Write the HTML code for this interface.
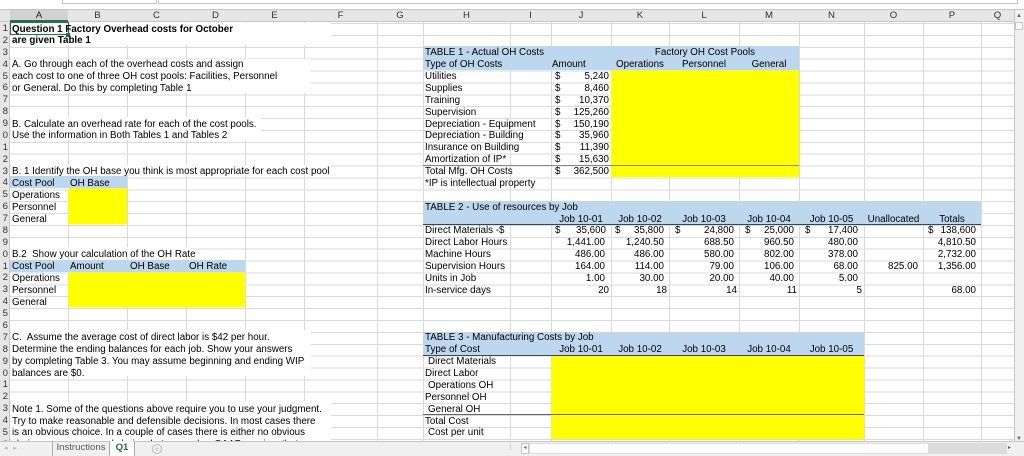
<!DOCTYPE html>
<html><head><meta charset="utf-8">
<style>
*{margin:0;padding:0;box-sizing:border-box}
body{width:1024px;height:456px;overflow:hidden;background:#fff;font-family:"Liberation Sans",Arial,sans-serif;font-size:9.8px;color:#000;position:relative}
.g{position:absolute;left:10px;top:22.5px;width:1004px;height:420px;background:repeating-linear-gradient(to bottom,#dadada 0,#dadada 1px,transparent 1px,transparent 11.88px)}
.v{position:absolute;top:10px;height:431px;width:1px;background:#dadada}
.c{position:absolute;top:calc(23.5px + var(--r) * 11.88px);height:11.88px;line-height:12px;white-space:nowrap}
.t{position:absolute;top:calc(23.5px + var(--r) * 11.88px);line-height:12px;white-space:nowrap}
.bl{position:absolute;background:#bdd7ee}
.ye{position:absolute;background:#ffff00}
.hl{position:absolute;height:1px;background:#444}
.r{text-align:right}
.ctr{text-align:center}
.hd{position:absolute;top:10px;height:12px;background:#e6e6e6;border-bottom:1px solid #c6c6c6;width:1014px;left:0}
.hd span{position:absolute;top:0;line-height:12px;text-align:center;color:#333;font-size:9.6px}
.rn{position:absolute;left:0;width:10px;background:#e6e6e6;border-right:1px solid #c6c6c6;top:22px;height:420px}
.rn span{position:absolute;left:0;width:8px;text-align:right;font-size:9.6px;color:#333;line-height:12px;top:calc(1px + var(--r) * 11.88px)}
</style></head><body>
<div style="position:absolute;left:0;top:0;width:1024px;height:10px;background:#fff;border-bottom:1px solid #c6c6c6"></div>
<div style="position:absolute;left:62px;top:0;width:95px;height:4px;border:1px solid #c6c6c6;border-top:none"></div>
<div style="position:absolute;left:158px;top:0;width:860px;height:4px;border:1px solid #c6c6c6;border-top:none"></div>
<div class="g"></div>
<div class="v" style="left:68px"></div><div class="v" style="left:127px"></div><div class="v" style="left:186px"></div><div class="v" style="left:245px"></div><div class="v" style="left:304px"></div><div class="v" style="left:377px"></div><div class="v" style="left:423px"></div><div class="v" style="left:510px"></div><div class="v" style="left:551px"></div><div class="v" style="left:611px"></div><div class="v" style="left:669px"></div><div class="v" style="left:739px"></div><div class="v" style="left:799px"></div><div class="v" style="left:864px"></div><div class="v" style="left:923px"></div><div class="v" style="left:981px"></div>
<div style="position:absolute;left:11px;top:23px;width:320px;height:22px;background:#fff"></div>
<div style="position:absolute;left:11px;top:58.5px;width:300px;height:34px;background:#fff"></div>
<div style="position:absolute;left:11px;top:117px;width:250px;height:23px;background:#fff"></div>
<div style="position:absolute;left:11px;top:165px;width:320px;height:10px;background:#fff"></div>
<div style="position:absolute;left:11px;top:247px;width:180px;height:10px;background:#fff"></div>
<div style="position:absolute;left:11px;top:330px;width:300px;height:46px;background:#fff"></div>
<div style="position:absolute;left:11px;top:401px;width:320px;height:40px;background:#fff"></div>

<div class="hd">
<span style="left:10px;width:58px">A</span><span style="left:68px;width:59px">B</span><span style="left:127px;width:59px">C</span><span style="left:186px;width:59px">D</span><span style="left:245px;width:59px">E</span><span style="left:304px;width:73px">F</span><span style="left:377px;width:46px">G</span><span style="left:423px;width:87px">H</span><span style="left:510px;width:41px">I</span><span style="left:551px;width:60px">J</span><span style="left:611px;width:58px">K</span><span style="left:669px;width:70px">L</span><span style="left:739px;width:60px">M</span><span style="left:799px;width:65px">N</span><span style="left:864px;width:59px">O</span><span style="left:923px;width:58px">P</span><span style="left:981px;width:33px">Q</span>
</div>
<div style="position:absolute;left:10px;top:10px;width:58px;height:12px;background:#d2d2d2;border-bottom:2px solid #217346"></div>
<span style="position:absolute;left:10px;top:10px;width:58px;text-align:center;line-height:12px;color:#222;font-size:9.6px">A</span>
<div class="rn">
<span style="--r:0">1</span><span style="--r:1">2</span><span style="--r:2">3</span><span style="--r:3">4</span><span style="--r:4">5</span><span style="--r:5">6</span><span style="--r:6">7</span><span style="--r:7">8</span><span style="--r:8">9</span><span style="--r:9">0</span><span style="--r:10">1</span><span style="--r:11">2</span><span style="--r:12">3</span><span style="--r:13">4</span><span style="--r:14">5</span><span style="--r:15">6</span><span style="--r:16">7</span><span style="--r:17">8</span><span style="--r:18">9</span><span style="--r:19">0</span><span style="--r:20">1</span><span style="--r:21">2</span><span style="--r:22">3</span><span style="--r:23">4</span><span style="--r:24">5</span><span style="--r:25">6</span><span style="--r:26">7</span><span style="--r:27">8</span><span style="--r:28">9</span><span style="--r:29">0</span><span style="--r:30">1</span><span style="--r:31">2</span><span style="--r:32">3</span><span style="--r:33">4</span><span style="--r:34">5</span><span style="--r:35">6</span>
</div>

<div class="bl" style="left:10px;top:176px;width:117px;height:12px"></div>
<div class="ye" style="left:68px;top:188px;width:59px;height:36px"></div>
<div class="bl" style="left:10px;top:260px;width:235px;height:12px"></div>
<div class="ye" style="left:68px;top:272px;width:177px;height:35px"></div>
<div class="bl" style="left:423px;top:46px;width:376px;height:24px"></div>
<div class="ye" style="left:611px;top:70px;width:188px;height:107px"></div>
<div class="hl" style="left:423px;top:165px;width:376px;background:#888"></div>
<div class="bl" style="left:423px;top:201px;width:558px;height:23px"></div>
<div class="hl" style="left:423px;top:224px;width:558px"></div>
<div class="bl" style="left:423px;top:331.5px;width:441px;height:23.5px"></div>
<div class="hl" style="left:423px;top:354.5px;width:441px"></div>
<div class="ye" style="left:551px;top:355.5px;width:313px;height:83px"></div>
<div class="hl" style="left:423px;top:414px;width:441px;background:#666"></div>

<div style="position:absolute;left:10px;top:22px;width:59px;height:13px;border:1.5px solid #217346"></div>
<div style="position:absolute;left:66px;top:33px;width:4px;height:4px;background:#217346"></div>

<div class="t" style="--r:0;left:12px;font-weight:bold">Question 1 Factory Overhead costs for October</div>
<div class="t" style="--r:1;left:12px;font-weight:bold">are given Table 1</div>
<div class="t" style="--r:3;left:12px">A. Go through each of the overhead costs and assign</div>
<div class="t" style="--r:4;left:12px">each cost to one of three OH cost pools: Facilities, Personnel</div>
<div class="t" style="--r:5;left:12px">or General. Do this by completing Table 1</div>
<div class="t" style="--r:8;left:12px">B. Calculate an overhead rate for each of the cost pools.</div>
<div class="t" style="--r:9;left:12px">Use the information in Both Tables 1 and Tables 2</div>
<div class="t" style="--r:12;left:12px">B. 1 Identify the OH base you think is most appropriate for each cost pool</div>
<div class="t" style="--r:13;left:12px">Cost Pool</div><div class="t" style="--r:13;left:70px">OH Base</div>
<div class="t" style="--r:14;left:12px">Operations</div>
<div class="t" style="--r:15;left:12px">Personnel</div>
<div class="t" style="--r:16;left:12px">General</div>
<div class="t" style="--r:19;left:12px">B.2&nbsp; Show your calculation of the OH Rate</div>
<div class="t" style="--r:20;left:12px">Cost Pool</div><div class="t" style="--r:20;left:70px">Amount</div><div class="t" style="--r:20;left:130px">OH Base</div><div class="t" style="--r:20;left:189px">OH Rate</div>
<div class="t" style="--r:21;left:12px">Operations</div>
<div class="t" style="--r:22;left:12px">Personnel</div>
<div class="t" style="--r:23;left:12px">General</div>
<div class="t" style="--r:26;left:12px">C.&nbsp; Assume the average cost of direct labor is $42 per hour.</div>
<div class="t" style="--r:27;left:12px">Determine the ending balances for each job. Show your answers</div>
<div class="t" style="--r:28;left:12px">by completing Table 3. You may assume beginning and ending WIP</div>
<div class="t" style="--r:29;left:12px">balances are $0.</div>
<div class="t" style="--r:32;left:12px">Note 1. Some of the questions above require you to use your judgment.</div>
<div class="t" style="--r:33;left:12px">Try to make reasonable and defensible decisions. In most cases there</div>
<div class="t" style="--r:34;left:12px">is an obvious choice. In a couple of cases there is either no obvious</div>
<div class="t" style="--r:35;left:12px">choice or even no good choice, but remember GAAP requires that</div>

<div class="t" style="--r:2;left:425px">TABLE 1 - Actual OH Costs</div>
<div class="c ctr" style="--r:2;left:611px;width:188px">Factory OH Cost Pools</div>
<div class="t" style="--r:3;left:425px">Type of OH Costs</div>
<div class="t" style="--r:3;left:552px">Amount</div>
<div class="c ctr" style="--r:3;left:611px;width:58px">Operations</div>
<div class="c ctr" style="--r:3;left:669px;width:70px">Personnel</div>
<div class="c ctr" style="--r:3;left:739px;width:60px">General</div>
<div class="t" style="--r:4;left:425px">Utilities</div>
<div class="t" style="--r:5;left:425px">Supplies</div>
<div class="t" style="--r:6;left:425px">Training</div>
<div class="t" style="--r:7;left:425px">Supervision</div>
<div class="t" style="--r:8;left:425px">Depreciation - Equipment</div>
<div class="t" style="--r:9;left:425px">Depreciation - Building</div>
<div class="t" style="--r:10;left:425px">Insurance on Building</div>
<div class="t" style="--r:11;left:425px">Amortization of IP*</div>
<div class="t" style="--r:12;left:425px">Total Mfg. OH Costs</div>
<div class="t" style="--r:13;left:425px">*IP is intellectual property</div>
<div class="t" style="--r:4;left:555px">$</div><div class="c r" style="--r:4;left:551px;width:58px">5,240</div>
<div class="t" style="--r:5;left:555px">$</div><div class="c r" style="--r:5;left:551px;width:58px">8,460</div>
<div class="t" style="--r:6;left:555px">$</div><div class="c r" style="--r:6;left:551px;width:58px">10,370</div>
<div class="t" style="--r:7;left:555px">$</div><div class="c r" style="--r:7;left:551px;width:58px">125,260</div>
<div class="t" style="--r:8;left:555px">$</div><div class="c r" style="--r:8;left:551px;width:58px">150,190</div>
<div class="t" style="--r:9;left:555px">$</div><div class="c r" style="--r:9;left:551px;width:58px">35,960</div>
<div class="t" style="--r:10;left:555px">$</div><div class="c r" style="--r:10;left:551px;width:58px">11,390</div>
<div class="t" style="--r:11;left:555px">$</div><div class="c r" style="--r:11;left:551px;width:58px">15,630</div>
<div class="t" style="--r:12;left:555px">$</div><div class="c r" style="--r:12;left:551px;width:58px">362,500</div>

<div class="t" style="--r:15;left:425px">TABLE 2 - Use of resources by Job</div>
<div class="c ctr" style="--r:16;left:551px;width:60px">Job 10-01</div>
<div class="c ctr" style="--r:16;left:611px;width:58px">Job 10-02</div>
<div class="c ctr" style="--r:16;left:669px;width:70px">Job 10-03</div>
<div class="c ctr" style="--r:16;left:739px;width:60px">Job 10-04</div>
<div class="c ctr" style="--r:16;left:799px;width:65px">Job 10-05</div>
<div class="c ctr" style="--r:16;left:864px;width:59px">Unallocated</div>
<div class="c ctr" style="--r:16;left:923px;width:58px">Totals</div>
<div class="t" style="--r:17;left:425px">Direct Materials -$</div>
<div class="t" style="--r:18;left:425px">Direct Labor Hours</div>
<div class="t" style="--r:19;left:425px">Machine Hours</div>
<div class="t" style="--r:20;left:425px">Supervision Hours</div>
<div class="t" style="--r:21;left:425px">Units in Job</div>
<div class="t" style="--r:22;left:425px">In-service days</div>
<div class="t" style="--r:17;left:555px">$</div><div class="c r" style="--r:17;left:551px;width:55px">35,600</div>
<div class="t" style="--r:17;left:615px">$</div><div class="c r" style="--r:17;left:611px;width:53px">35,800</div>
<div class="t" style="--r:17;left:675px">$</div><div class="c r" style="--r:17;left:669px;width:65px">24,800</div>
<div class="t" style="--r:17;left:745px">$</div><div class="c r" style="--r:17;left:739px;width:55px">25,000</div>
<div class="t" style="--r:17;left:805px">$</div><div class="c r" style="--r:17;left:799px;width:59px">17,400</div>
<div class="t" style="--r:17;left:928px">$</div><div class="c r" style="--r:17;left:923px;width:53px">138,600</div>
<div class="c r" style="--r:18;left:551px;width:54px">1,441.00</div>
<div class="c r" style="--r:18;left:611px;width:53px">1,240.50</div>
<div class="c r" style="--r:18;left:669px;width:65px">688.50</div>
<div class="c r" style="--r:18;left:739px;width:55px">960.50</div>
<div class="c r" style="--r:18;left:799px;width:59px">480.00</div>
<div class="c r" style="--r:18;left:923px;width:53px">4,810.50</div>
<div class="c r" style="--r:19;left:551px;width:54px">486.00</div>
<div class="c r" style="--r:19;left:611px;width:53px">486.00</div>
<div class="c r" style="--r:19;left:669px;width:65px">580.00</div>
<div class="c r" style="--r:19;left:739px;width:55px">802.00</div>
<div class="c r" style="--r:19;left:799px;width:59px">378.00</div>
<div class="c r" style="--r:19;left:923px;width:53px">2,732.00</div>
<div class="c r" style="--r:20;left:551px;width:54px">164.00</div>
<div class="c r" style="--r:20;left:611px;width:53px">114.00</div>
<div class="c r" style="--r:20;left:669px;width:65px">79.00</div>
<div class="c r" style="--r:20;left:739px;width:55px">106.00</div>
<div class="c r" style="--r:20;left:799px;width:59px">68.00</div>
<div class="c r" style="--r:20;left:864px;width:54px">825.00</div>
<div class="c r" style="--r:20;left:923px;width:53px">1,356.00</div>
<div class="c r" style="--r:21;left:551px;width:54px">1.00</div>
<div class="c r" style="--r:21;left:611px;width:53px">30.00</div>
<div class="c r" style="--r:21;left:669px;width:65px">20.00</div>
<div class="c r" style="--r:21;left:739px;width:55px">40.00</div>
<div class="c r" style="--r:21;left:799px;width:59px">5.00</div>
<div class="c r" style="--r:22;left:551px;width:58px">20</div>
<div class="c r" style="--r:22;left:611px;width:56px">18</div>
<div class="c r" style="--r:22;left:669px;width:68px">14</div>
<div class="c r" style="--r:22;left:739px;width:58px">11</div>
<div class="c r" style="--r:22;left:799px;width:63px">5</div>
<div class="c r" style="--r:22;left:923px;width:53px">68.00</div>

<div class="t" style="--r:26;left:425px">TABLE 3 - Manufacturing Costs by Job</div>
<div class="t" style="--r:27;left:425px">Type of Cost</div>
<div class="c ctr" style="--r:27;left:551px;width:60px">Job 10-01</div>
<div class="c ctr" style="--r:27;left:611px;width:58px">Job 10-02</div>
<div class="c ctr" style="--r:27;left:669px;width:70px">Job 10-03</div>
<div class="c ctr" style="--r:27;left:739px;width:60px">Job 10-04</div>
<div class="c ctr" style="--r:27;left:799px;width:65px">Job 10-05</div>
<div class="t" style="--r:28;left:428px">Direct Materials</div>
<div class="t" style="--r:29;left:425px">Direct Labor</div>
<div class="t" style="--r:30;left:428px">Operations OH</div>
<div class="t" style="--r:31;left:425px">Personnel OH</div>
<div class="t" style="--r:32;left:428px">General OH</div>
<div class="t" style="--r:33;left:425px">Total Cost</div>
<div class="t" style="--r:34;left:428px">Cost per unit</div>

<div style="position:absolute;left:1014px;top:10px;width:10px;height:432px;background:#f0f0f0;border-left:1px solid #c6c6c6"></div>
<div style="position:absolute;left:1015px;top:13px;width:8px;height:10px;font-size:6px;color:#666;text-align:center">▲</div>
<div style="position:absolute;left:1015px;top:22px;width:8px;height:8px;background:#fff;border:1px solid #c6c6c6"></div>
<div style="position:absolute;left:1015px;top:436px;width:8px;height:6px;font-size:6px;color:#666;text-align:center;line-height:6px">▼</div>
<div style="position:absolute;left:0;top:441px;width:1024px;height:15px;background:#f0f0f0;border-top:1px solid #c6c6c6"></div>
<div style="position:absolute;left:4px;top:444px;font-size:7px;color:#bbb">◂&nbsp;&nbsp;&nbsp;▸</div>
<div style="position:absolute;left:52px;top:441px;width:58px;height:15px;border-left:1px solid #aaa;border-right:1px solid #aaa;text-align:center;line-height:13px;color:#555;font-size:9.6px">Instructions</div>
<div style="position:absolute;left:110px;top:441px;width:25px;height:15px;background:#fff;border-right:1px solid #aaa;text-align:center;line-height:13px;color:#217346;font-weight:bold;font-size:9.6px">Q1</div>
<div style="position:absolute;left:152px;top:444px;width:10px;height:10px;border:1px solid #bbb;border-radius:50%;text-align:center;line-height:8px;color:#bbb;font-size:9px">+</div>
<div style="position:absolute;left:509px;top:443px;font-size:8px;color:#999">⁝</div>
<div style="position:absolute;left:521px;top:443px;width:8px;height:11px;background:#fff;border:1px solid #c6c6c6;font-size:6px;color:#666;line-height:9px;text-align:center">◂</div>
<div style="position:absolute;left:529px;top:443px;width:400px;height:11px;background:#fff;border:1px solid #dcdcdc"></div>
<div style="position:absolute;left:929px;top:443px;width:78px;height:11px;background:#dcdcdc"></div>
<div style="position:absolute;left:1008px;top:443px;width:6px;height:11px;font-size:6px;color:#666;line-height:11px">▸</div>
</body></html>
